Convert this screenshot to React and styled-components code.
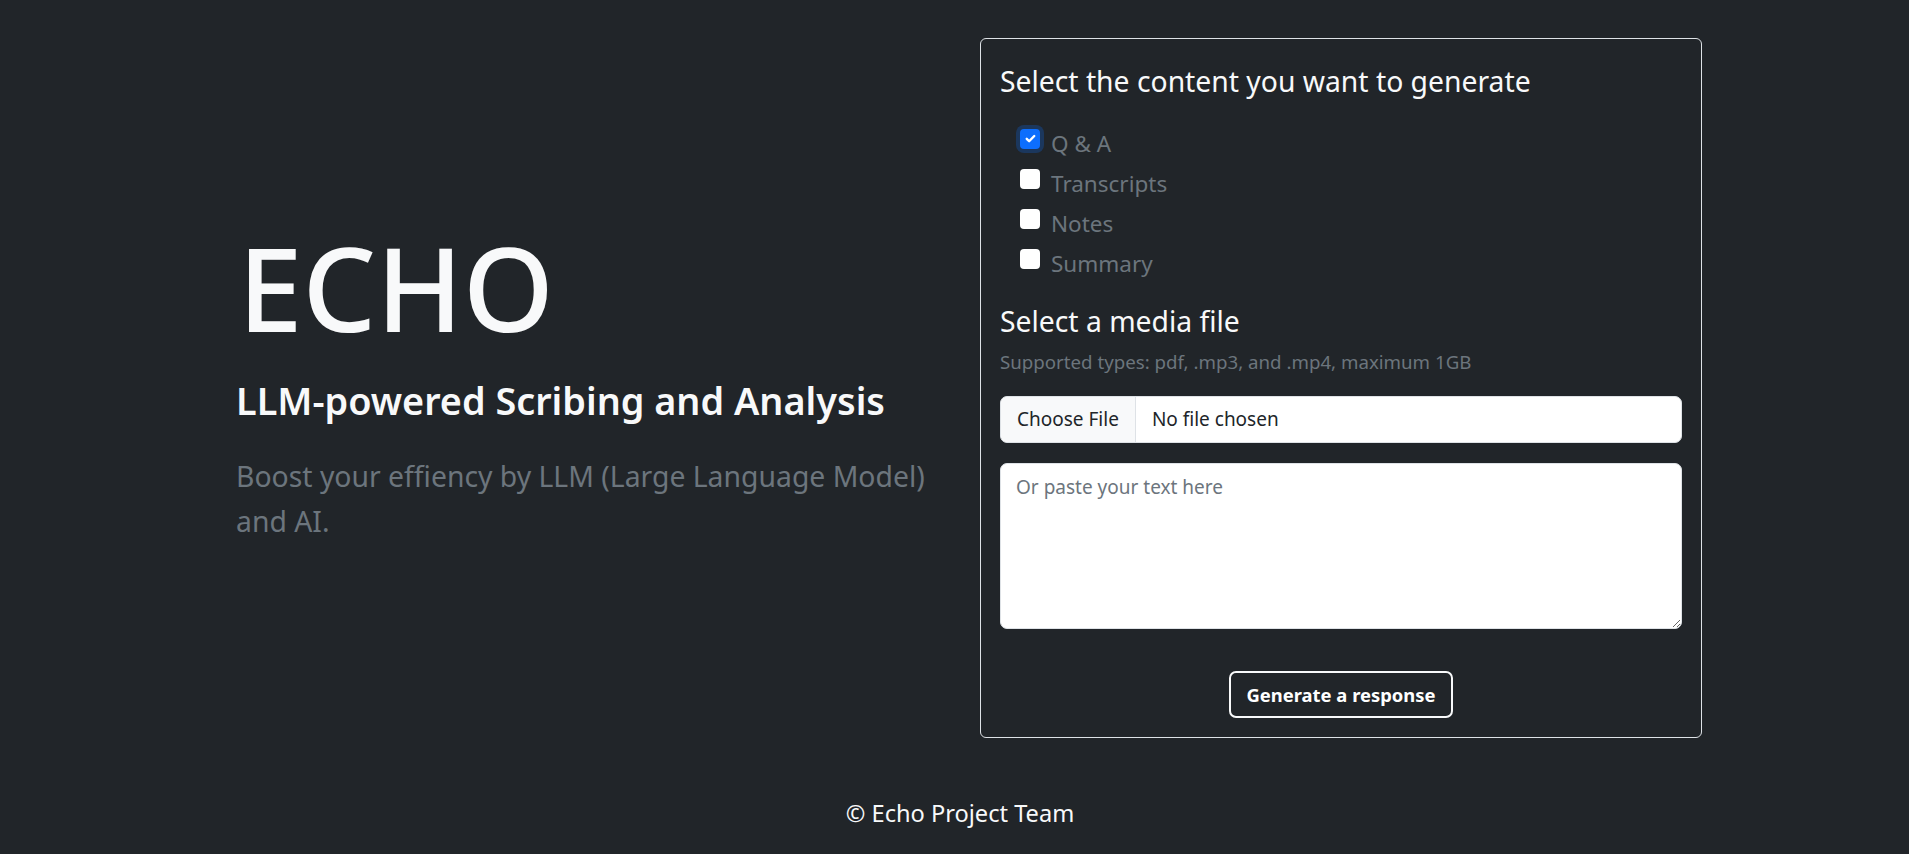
import React from "react";
import styled, { createGlobalStyle } from "styled-components";

const GlobalStyle = createGlobalStyle`
  html, body {
    margin: 0;
    padding: 0;
    background: #212529;
  }
  body {
    font-family: "Noto Sans", "Open Sans", sans-serif;
    color: #f8f9fa;
  }
  * { box-sizing: border-box; }
`;

const Page = styled.div`
  min-height: 100vh;
  display: flex;
  flex-direction: column;
`;

const Main = styled.main`
  display: flex;
  align-items: flex-start;
  padding: 38px 207px 0 236px;
`;

const Hero = styled.section`
  flex: 1;
  padding-top: 180px;
`;

const Title = styled.h1`
  margin: 0 0 0 2px;
  font-size: 116px;
  line-height: 1.2;
  font-weight: 500;
  color: #f8f9fa;
`;

const Subtitle = styled.h2`
  margin: 21px 0 0;
  font-size: 37.8px;
  line-height: 1.2;
  font-weight: 600;
  color: #f8f9fa;
`;

const Lead = styled.p`
  margin: 30px 0 0;
  max-width: 705px;
  font-size: 28.35px;
  line-height: 45px;
  font-weight: 400;
  color: #6c757d;
`;

const Card = styled.form`
  width: 722px;
  height: 700px;
  border: 1px solid #dee2e6;
  border-radius: 6px;
  padding: 26px 19px 19px;
  display: flex;
  flex-direction: column;
`;

const Heading = styled.h5`
  margin: ${(p) => p.$mt || 0}px 0 0;
  font-size: 28.3px;
  line-height: 1.2;
  font-weight: 400;
  color: #f8f9fa;
`;

const CheckList = styled.div`
  margin-top: 25px;
  padding-left: 20px;
`;

const CheckRow = styled.label`
  display: flex;
  align-items: flex-start;
  height: 40px;
  font-size: 22.5px;
  line-height: 40px;
  color: #6c757d;
  cursor: pointer;
`;

const Box = styled.span`
  flex: none;
  width: 20px;
  height: 20px;
  margin: 5px 11px 0 0;
  border-radius: 4px;
  display: flex;
  align-items: center;
  justify-content: center;
  background: ${(p) => (p.$checked ? "#0d6efd" : "#ffffff")};
  box-shadow: ${(p) =>
    p.$checked ? "0 0 0 4px rgba(13, 110, 253, 0.25)" : "none"};
`;

const HelpText = styled.div`
  margin-top: 9px;
  font-size: 18.7px;
  line-height: 27px;
  color: #6c757d;
`;

const FileInput = styled.input`
  margin-top: 21px;
  width: 100%;
  height: 47px;
  padding: 0;
  border: 1px solid #dee2e6;
  border-radius: 7px;
  background: #ffffff;
  color: #212529;
  font-family: inherit;
  font-size: 19px;
  line-height: 45px;
  overflow: hidden;

  &::file-selector-button {
    height: 45px;
    margin: 0 16px 0 0;
    padding: 0 16px;
    border: 0;
    border-right: 1px solid #dee2e6;
    border-radius: 7px 0 0 7px;
    background: #f8f9fa;
    color: #212529;
    font: inherit;
  }
`;

const TextArea = styled.textarea`
  margin-top: 20px;
  width: 100%;
  height: 166px;
  padding: 9px 15px;
  border: 1px solid #dee2e6;
  border-radius: 7px;
  background: #ffffff;
  color: #212529;
  font-family: inherit;
  font-size: 19px;
  line-height: 1.5;

  &::placeholder {
    color: #6c757d;
  }
`;

const Actions = styled.div`
  margin-top: 42px;
  display: flex;
  justify-content: center;
`;

const Button = styled.button`
  width: 224px;
  height: 47px;
  border: 2px solid #f8f9fa;
  border-radius: 7px;
  background: transparent;
  color: #ffffff;
  font-family: inherit;
  font-size: 18.4px;
  font-weight: 700;
  cursor: pointer;
`;

const Footer = styled.footer`
  margin-top: 59px;
  padding-left: 11px;
  text-align: center;
  font-size: 23.6px;
  line-height: 33px;
  color: #f8f9fa;
`;

const CheckIcon = () => (
  <svg width="15" height="15" viewBox="0 0 20 20" fill="none">
    <path
      d="M5 10.5l3.2 3.2 6.8-7"
      stroke="#fff"
      strokeWidth="3.2"
      strokeLinecap="round"
      strokeLinejoin="round"
    />
  </svg>
);

const options = [
  { label: "Q & A", checked: true },
  { label: "Transcripts", checked: false },
  { label: "Notes", checked: false },
  { label: "Summary", checked: false },
];

export default function App() {
  return (
    <Page>
      <GlobalStyle />
      <Main>
        <Hero>
          <Title>ECHO</Title>
          <Subtitle>LLM-powered Scribing and Analysis</Subtitle>
          <Lead>Boost your effiency by LLM (Large Language Model) and AI.</Lead>
        </Hero>
        <Card onSubmit={(e) => e.preventDefault()}>
          <Heading>Select the content you want to generate</Heading>
          <CheckList>
            {options.map((o) => (
              <CheckRow key={o.label}>
                <Box $checked={o.checked}>{o.checked && <CheckIcon />}</Box>
                {o.label}
              </CheckRow>
            ))}
          </CheckList>
          <Heading $mt={21}>Select a media file</Heading>
          <HelpText>Supported types: pdf, .mp3, and .mp4, maximum 1GB</HelpText>
          <FileInput type="file" />
          <TextArea placeholder="Or paste your text here" />
          <Actions>
            <Button type="submit">Generate a response</Button>
          </Actions>
        </Card>
      </Main>
      <Footer>© Echo Project Team</Footer>
    </Page>
  );
}
